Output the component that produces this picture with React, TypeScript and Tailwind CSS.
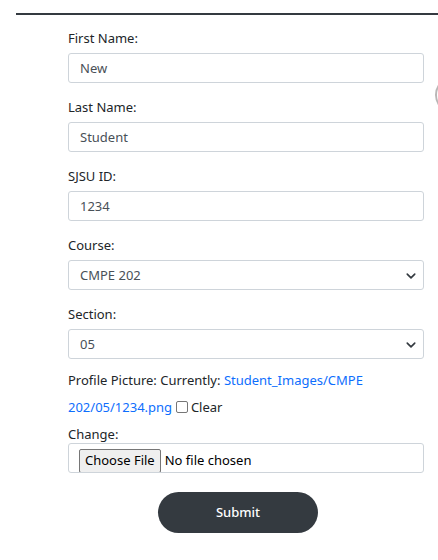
const fields = [
  { label: 'First Name:', value: 'New' },
  { label: 'Last Name:', value: 'Student' },
  { label: 'SJSU ID:', value: '1234' },
]

const selects = [
  { label: 'Course:', value: 'CMPE 202' },
  { label: 'Section:', value: '05' },
]

function Chevron() {
  return (
    <svg width="10" height="10" viewBox="0 0 16 16" className="text-[#343a40]">
      <path d="M2 5l6 6 6-6" fill="none" stroke="currentColor" strokeWidth="2.6" strokeLinecap="round" strokeLinejoin="round" />
    </svg>
  )
}

export default function App() {
  return (
    <div className="relative h-[560px] w-[438px] overflow-hidden bg-white font-['Noto_Sans',sans-serif] text-[13px] text-[#212529]">
      {/*top rule*/}
      <div className="ml-4 mt-[13px] h-[2px] bg-[#343a40]" />

      {/*stray round thing on the right edge*/}
      <div className="absolute left-[435px] top-[76px] h-[38px] w-[38px] rounded-full border-2 border-[#b9b6b6] bg-white" />

      <form className="ml-[68px] mt-[13px] w-[356px]">
        {fields.map((f) => (
          <div key={f.label} className="mb-[14px]">
            <label className="block leading-[20px] mb-[5px]">{f.label}</label>
            <div className="flex h-[30px] items-center rounded-[3px] border border-[#ced4da] px-[11px] pt-[2px] text-[#495057]">
              {f.value}
            </div>
          </div>
        ))}

        {selects.map((s) => (
          <div key={s.label} className="mb-[14px]">
            <label className="block leading-[20px] mb-[5px]">{s.label}</label>
            <div className="flex h-[30px] items-center justify-between rounded-[3px] border border-[#ced4da] pl-[11px] pr-[7px] pt-[2px] text-[#495057]">
              <span>{s.value}</span>
              <Chevron />
            </div>
          </div>
        ))}

        <p className="-mt-[6px] leading-[27px]">
          Profile Picture: Currently:{' '}
          <a href="#" className="text-[#0d6efd]">Student_Images/CMPE 202/05/1234.png</a>{' '}
          <span className="inline-block h-[12px] w-[12px] rounded-[2px] border border-[#767676] bg-white align-[-1px]" /> Clear
        </p>

        <label className="mt-[4px] block leading-[18px]">Change:</label>
        <div className="flex h-[30px] items-start overflow-hidden rounded-[3px] border border-[#ced4da] pl-[10px] pt-[5px]">
          <span className="flex h-[24px] items-center rounded-[2px] border border-[#767676] bg-[#efefef] px-[5px] text-black">Choose File</span>
          <span className="ml-[4px] mt-[2px] text-black">No file chosen</span>
        </div>
      </form>

      <div className="mt-[19px] pl-[158px]">
        <button className="h-[41px] w-[160px] rounded-full bg-[#343a40] text-[13px] font-medium text-white">
          Submit
        </button>
      </div>
    </div>
  )
}
